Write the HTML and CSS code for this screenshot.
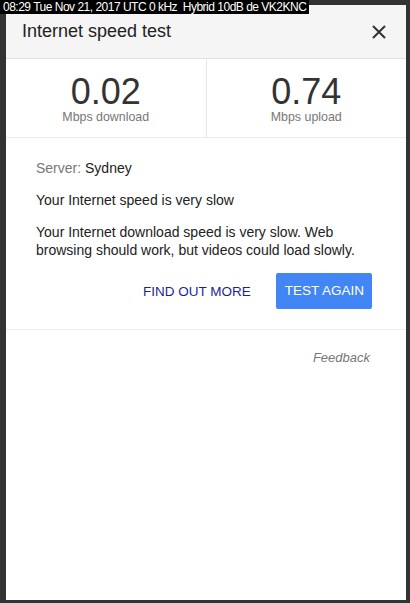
FILE: index.html
```html
<!DOCTYPE html>
<html lang="en">
<head>
  <meta charset="UTF-8">
  <meta name="viewport" content="width=device-width, initial-scale=1.0">
  <title>Internet speed test</title>
  <link rel="stylesheet" href="styles.css">
</head>
<body>
  <!-- Timestamp overlay -->
  <div class="stamp">08:29 Tue Nov 21, 2017 UTC 0 kHz&nbsp; Hybrid 10dB de VK2KNC</div>

  <!-- Speed test dialog -->
  <div class="dialog">
    <div class="dialog-header">
      <span class="dialog-title">Internet speed test</span>
      <svg class="close" width="14" height="14" viewBox="0 0 14 14">
        <path d="M1 1 L13 13 M13 1 L1 13" stroke="#333" stroke-width="2" fill="none"/>
      </svg>
    </div>

    <div class="stats">
      <div class="stat">
        <div class="stat-value">0.02</div>
        <div class="stat-label">Mbps download</div>
      </div>
      <div class="stat">
        <div class="stat-value">0.74</div>
        <div class="stat-label">Mbps upload</div>
      </div>
    </div>

    <div class="result">
      <p class="server"><span class="muted">Server:</span> Sydney</p>
      <p>Your Internet speed is very slow</p>
      <p>Your Internet download speed is very slow. Web browsing should work, but videos could load slowly.</p>
      <div class="actions">
        <a class="link-btn">FIND OUT MORE</a>
        <a class="primary-btn">TEST AGAIN</a>
      </div>
    </div>

    <div class="feedback">Feedback</div>
  </div>
</body>
</html>
```

FILE: styles.css
```css
/* General Styles */
body {
  margin: 0;
  background: #333;
  font-family: "Liberation Sans", Arial, sans-serif;
  color: #222;
  height: 603px;
  overflow: hidden;
}

.stamp {
  position: absolute;
  top: 0;
  left: 0;
  background: #000;
  color: #fff;
  font-size: 12px;
  line-height: 14px;
  letter-spacing: -0.5px;
  padding: 0 3px 0 3px;
  white-space: nowrap;
}

/* Dialog */
.dialog {
  margin: 5px 0 0 6px;
  width: 400px;
  height: 595px;
  background: #fff;
}

.dialog-header {
  height: 53px;
  background: #f5f5f5;
  border-bottom: 1px solid #e0e0e0;
  display: flex;
  align-items: center;
  justify-content: space-between;
  padding: 0 20px 0 16px;
}

.dialog-title {
  font-size: 18px;
  line-height: 21px;
  color: #222;
}

.close {
  margin-top: 1px;
}

.stats {
  display: flex;
  height: 78px;
  border-bottom: 1px solid #ebebeb;
}

.stat {
  flex: 1;
  text-align: center;
  padding-top: 16px;
}

.stat:first-child {
  border-right: 1px solid #e8e8e8;
}

.stat-value {
  font-size: 36px;
  line-height: 34px;
  color: #333;
}

.stat-label {
  font-size: 12.4px;
  line-height: 14px;
  color: #777;
  margin-top: 1px;
}

/* Result text */
.result {
  padding: 21px 34px 20px 30px;
  border-bottom: 1px solid #eee;
}

.result p {
  margin: 0 0 14px;
  font-size: 14px;
  line-height: 18px;
}

.muted {
  color: #777;
}

.actions {
  display: flex;
  justify-content: flex-end;
  align-items: center;
  gap: 25px;
}

.link-btn {
  font-size: 13.5px;
  color: #1f1f94;
}

.primary-btn {
  background: #4285f4;
  color: #fff;
  font-size: 13.5px;
  line-height: 36px;
  height: 36px;
  padding: 0 8px 0 9px;
  border-radius: 2px;
}

.feedback {
  text-align: right;
  font-style: italic;
  font-size: 13px;
  line-height: 16px;
  color: #777;
  padding: 20px 36px 0 0;
}
```
